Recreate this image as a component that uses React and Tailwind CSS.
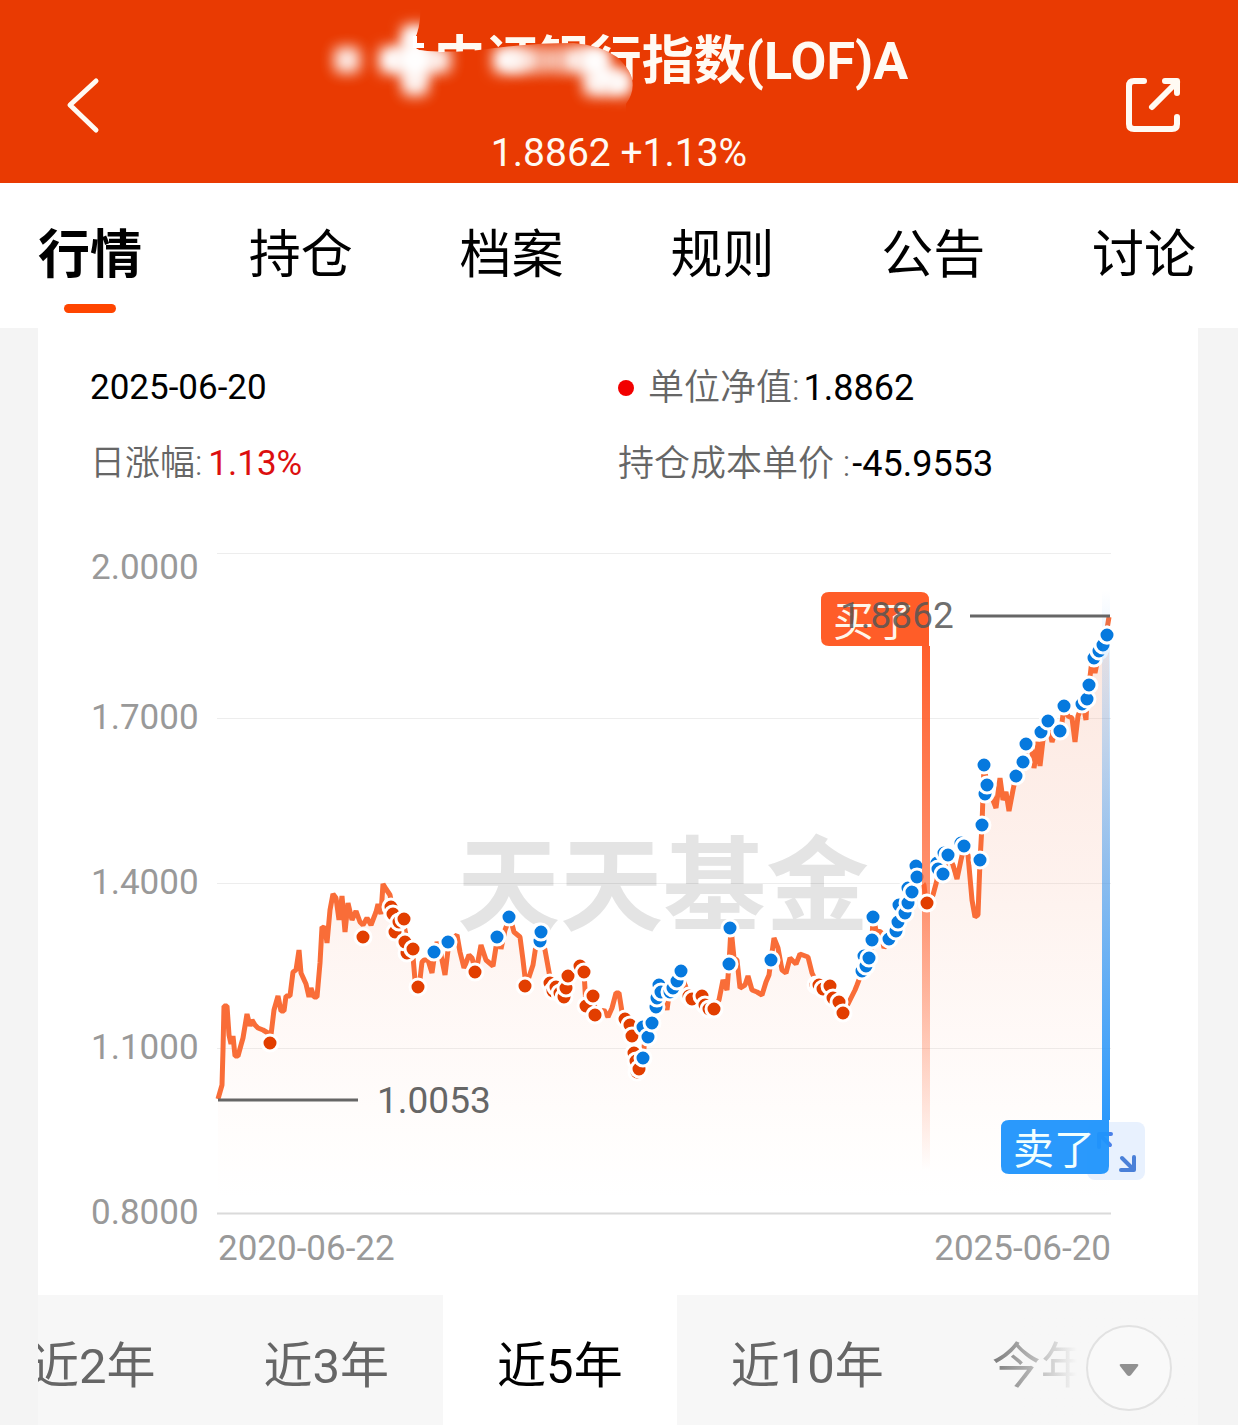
const TABS = ['行情', '持仓', '档案', '规则', '公告', '讨论'];
const RANGES = ['近2年', '近3年', '近5年', '近10年', '今年来'];

const AXIS = [
  { label: '2.0000', y: 553 },
  { label: '1.7000', y: 718 },
  { label: '1.4000', y: 883 },
  { label: '1.1000', y: 1048 },
  { label: '0.8000', y: 1213 },
];

const NET_VALUE =
  '218,1099 222,1085 223,1050 224,1006 227,1006 229,1035 231,1044 233,1036 235,1056 238,1056 241,1045 243,1038 247,1014 250,1026 252,1020 255,1025 258,1028 263,1030 268,1033 270,1040 271,1035 274,1010 278,996 281,1011 284,1011 286,996 290,996 293,972 296,970 299,950 301,973 306,984 309,997 311,988 314,997 317,997 320,963 322,927 325,928 327,943 330,910 333,894 336,898 339,920 342,896 345,932 348,903 352,920 356,911 360,922 363,925 367,918 371,925 376,912 378,904 381,914 383,884 386,889 390,895 392,905 396,925 402,915 407,940 412,945 415,980 419,988 422,962 424,960 428,960 432,973 435,952 437,942 441,955 445,975 449,942 457,935 460,952 464,968 469,955 472,958 476,972 481,945 486,960 493,966 496,947 499,935 501,949 505,930 510,917 514,932 520,937 523,960 526,986 533,965 536,945 541,932 545,950 549,972 552,990 558,996 564,995 566,987 568,976 575,970 580,964 584,972 586,1006 593,995 596,1015 604,1010 608,1017 612,1008 616,993 619,993 622,1012 627,1020 632,1035 635,1055 639,1072 643,1058 646,1028 652,1023 656,1000 660,985 664,992 667,1010 670,988 673,990 680,971 685,985 690,998 700,996 704,1005 710,1009 714,1009 719,1000 723,980 727,990 729,964 731,928 734,958 737,960 740,988 745,985 748,976 752,990 757,992 762,995 766,982 769,975 771,960 774,938 778,948 782,970 786,973 790,958 796,964 800,954 808,957 812,973 818,985 824,988 830,986 838,1000 843,1014 850,1000 855,990 857,985 862,972 866,963 870,958 872,940 873,917 876,930 881,932 884,948 890,938 898,925 903,912 908,900 912,890 916,866 921,880 924,885 926,903 933,895 937,880 938,865 943,873 948,855 953,865 957,879 961,860 964,847 968,855 972,900 975,917 978,915 980,861 982,825 984,765 987,785 990,790 993,800 996,808 1000,778 1003,800 1006,792 1009,811 1013,790 1016,776 1023,762 1027,744 1031,745 1034,768 1038,742 1040,766 1043,740 1048,722 1052,742 1056,730 1061,731 1064,706 1068,716 1072,718 1075,742 1078,716 1083,703 1086,720 1087,698 1089,685 1092,660 1095,673 1098,658 1102,648 1106,635 1109,617';

// b = bought, s = sold, in date order so later dots cover earlier ones
const TRADES = [
  ['b', [[270, 1043], [363, 937], [391, 907], [393, 914], [395, 932], [399, 922], [404, 919], [407, 953], [405, 942], [413, 949], [418, 987]]],
  ['s', [[434, 952], [448, 942]]],
  ['b', [[475, 972]]],
  ['s', [[497, 937], [509, 917]]],
  ['b', [[525, 986]]],
  ['s', [[539, 932], [540, 941], [541, 932]]],
  ['b', [[550, 983], [553, 991], [556, 987], [560, 993], [564, 997], [566, 988], [568, 976], [580, 966], [584, 972], [586, 1006], [593, 996], [595, 1015], [625, 1019], [630, 1025], [632, 1036], [634, 1053], [636, 1061], [637, 1072], [639, 1069]]],
  ['s', [[643, 1058], [643, 1027], [648, 1037], [652, 1023], [656, 1007], [657, 998], [659, 985], [661, 992], [670, 992], [673, 988], [677, 981], [681, 971]]],
  ['b', [[689, 996], [692, 999], [702, 996], [705, 1005], [709, 1009], [714, 1009]]],
  ['s', [[729, 964], [730, 928], [771, 960]]],
  ['b', [[816, 985], [819, 985], [823, 989], [830, 986], [833, 998], [839, 1002], [843, 1013]]],
  ['s', [[862, 971], [864, 956], [866, 966], [869, 958], [872, 940], [873, 917], [889, 939], [896, 931], [898, 922], [899, 905], [905, 913], [908, 903], [908, 888], [912, 892], [916, 866], [917, 877]]],
  ['b', [[927, 903]]],
  ['s', [[937, 863], [938, 869], [943, 874], [944, 853], [948, 855], [961, 843], [964, 846], [980, 860], [982, 825], [984, 765], [985, 794], [987, 785], [1016, 776], [1023, 762], [1026, 744], [1041, 732], [1048, 721], [1060, 731], [1064, 706], [1082, 704], [1087, 699], [1089, 685], [1094, 658], [1099, 651], [1103, 645], [1107, 635]]],
];

// x, y, opacity of each mosaic cell
const SMUDGES = [
  [348, 60, 0.9], [393, 60, 1], [416, 60, 1], [439, 60, 0.9], [416, 38, 1], [416, 83, 0.9],
  [507, 60, 1], [529, 60, 0.8], [552, 60, 0.65], [575, 60, 0.9], [597, 60, 1], [597, 83, 0.9], [620, 83, 1],
];

function TitleMask() {
  return (
    <svg className="absolute left-0 top-0 h-[112px] w-[310px]" viewBox="331 0 310 112" overflow="visible" aria-hidden="true">
      <defs>
        <filter id="soft" x="-100%" y="-100%" width="300%" height="300%">
          <feGaussianBlur stdDeviation="7" />
        </filter>
        <clipPath id="brush">
          <path d="M310 0H421Q423 26 415 40Q413 47 420 50Q440 53 480 50Q530 43 575 43Q600 45 618 57Q644 80 627 104V112H310Z" />
        </clipPath>
      </defs>
      <path d="M331 24H412V50Q440 54 480 50Q530 43 575 43Q600 45 618 57Q644 80 627 104H331Z" fill="#e93a02" />
      <path d="M414 36h4v7h7v5h-11z" fill="#fff" />
      <g clipPath="url(#brush)">
        {SMUDGES.map(([x, y, o]) => (
          <rect key={`${x}-${y}`} x={x - 13} y={y - 13} width="26" height="26" rx="6" fill="#fff" opacity={o} filter="url(#soft)" />
        ))}
        <path d="M393 60H436M416 34V84M507 60H526M580 60H597L602 80H622" fill="none" stroke="#fff" strokeWidth="18" filter="url(#soft)" />
      </g>
    </svg>
  );
}

function Header() {
  return (
    <header className="flex h-[183px] items-start justify-between bg-[#e93a02] pl-[60px] pr-[52px] text-[#fffaf3]">
      <button aria-label="返回" className="mt-[73px] w-14">
        <svg className="h-[64px] w-[48px]" viewBox="0 0 48 64" fill="none" stroke="currentColor" strokeWidth="5" strokeLinecap="round" strokeLinejoin="round">
          <path d="M36 8L10 32L36 57" />
        </svg>
      </button>
      <div className="flex flex-col items-center">
        <h1 className="relative pl-[104px] text-[52px] font-bold leading-[124px]">
          中证银行指数(LOF)A
          <TitleMask />
        </h1>
        <p className="text-[39px] leading-[58px]">1.8862 +1.13%</p>
      </div>
      <button aria-label="分享" className="mt-[73px]">
        <svg className="size-[64px]" viewBox="0 0 64 64" fill="none" stroke="currentColor" strokeWidth="6" strokeLinecap="round" strokeLinejoin="round">
          <path d="M22 8H12Q7 8 7 13V51Q7 56 12 56H50Q55 56 55 51V44M30 34L55 9M43 8H55V20" />
        </svg>
      </button>
    </header>
  );
}

function Tabs() {
  return (
    <nav className="flex h-[145px] items-start justify-between bg-white pl-[38px] pr-[42px] text-black">
      {TABS.map((tab, i) => (
        <button key={tab} className={`flex flex-col items-center text-[52px] leading-[80px] pt-[33px] ${i === 0 ? 'font-bold' : ''}`}>
          {tab}
          {i === 0 && <span className="mt-2 h-[9px] w-[52px] rounded-full bg-[#ff4500]" />}
        </button>
      ))}
    </nav>
  );
}

function Summary() {
  return (
    <div className="grid grid-cols-2 px-[52px] pt-[22px] pb-2 text-[36px] leading-[76px] text-black">
      <div className="text-[35px]">2025-06-20</div>
      <div className="flex items-center">
        <span className="mr-[14px] size-4 rounded-full bg-[#f20000]" />
        <span className="mr-1 text-[#666] font-[350]">单位净值:</span>
        1.8862
      </div>
      <div className="text-[35px]">
        <span className="mr-1.5 text-[#666] font-[350]">日涨幅:</span>
        <span className="text-[#dc0f0f]">1.13%</span>
      </div>
      <div>
        <span className="mr-0.5 text-[#666] font-[350]">持仓成本单价 :</span>
        -45.9553
      </div>
    </div>
  );
}

function Chart() {
  return (
    <div className="relative">
      <button aria-label="全屏" className="absolute bottom-[115px] right-[53px] size-[58px] rounded-lg bg-[#e8f1fe]">
        <svg className="size-full" viewBox="0 0 58 58" fill="none" stroke="#4a80d8" strokeWidth="4" strokeLinecap="round" strokeLinejoin="round">
          <path d="M35 36L46 47M47 35V48H34" />
          <path d="M12 25V12H24M13 13L23 23" stroke="#4a80e8" />
        </svg>
      </button>
      <svg className="pointer-events-none relative block w-full" viewBox="38 510 1160 785" role="img" aria-label="单位净值走势">
        <defs>
          <linearGradient id="area" gradientUnits="userSpaceOnUse" x1="0" y1="617" x2="0" y2="1200">
            <stop offset="0" stopColor="#f4a98c" stopOpacity="0.28" />
            <stop offset="0.45" stopColor="#f8b096" stopOpacity="0.17" />
            <stop offset="1" stopColor="#ffc9b5" stopOpacity="0" />
          </linearGradient>
          <linearGradient id="buy" gradientUnits="userSpaceOnUse" x1="0" y1="646" x2="0" y2="1170">
            <stop offset="0" stopColor="#ff5f2c" />
            <stop offset="0.5" stopColor="#ff5f2c" stopOpacity="0.65" />
            <stop offset="1" stopColor="#ff5f2c" stopOpacity="0" />
          </linearGradient>
          <linearGradient id="sell" gradientUnits="userSpaceOnUse" x1="0" y1="590" x2="0" y2="1120">
            <stop offset="0" stopColor="#2b99fc" stopOpacity="0" />
            <stop offset="0.5" stopColor="#2b8fee" stopOpacity="0.5" />
            <stop offset="1" stopColor="#2b99fc" />
          </linearGradient>
        </defs>

        <text x="457" y="923" fontSize="103" fontWeight="700" fill="#e4e4e4">天天基金</text>

        {AXIS.map(({ label, y }, i) => (
          <g key={label}>
            <line x1="217" x2="1111" y1={y + 0.5} y2={y + 0.5} stroke={i === 4 ? '#dadada' : '#000'} strokeOpacity={i === 4 ? 1 : 0.07} strokeWidth={i === 4 ? 2 : 1} />
            <text x="91" y={i === 0 ? 579 : y + 11} fontSize="35" fill="#999">{label}</text>
          </g>
        ))}
        <text x="218" y="1260" fontSize="35" fill="#999">2020-06-22</text>
        <text x="1111" y="1260" fontSize="35" fill="#999" textAnchor="end">2025-06-20</text>

        <polygon points={`218,1213 ${NET_VALUE} 1110,1213`} fill="url(#area)" />
        <polyline points={NET_VALUE} fill="none" stroke="#f96d38" strokeWidth="5" strokeLinejoin="bevel" />

        {TRADES.map(([side, dots]) =>
          dots.map(([x, y]) => (
            <circle key={`${x}-${y}`} cx={x} cy={y} r="8" fill={side === 'b' ? '#e23e00' : '#0679de'} stroke="#fff" strokeWidth="3" />
          ))
        )}

        <rect x="922" y="646" width="8" height="524" fill="url(#buy)" />
        <rect x="1102" y="590" width="8" height="530" fill="url(#sell)" />
        <circle cx="927" cy="903" r="8" fill="#e23e00" stroke="#fff" strokeWidth="3" />
        <circle cx="1107" cy="635" r="8" fill="#0679de" stroke="#fff" strokeWidth="3" />

        <path d="M829 592H921Q929 592 929 600V646H829Q821 646 821 638V600Q821 592 829 592Z" fill="#ff5d28" />
        <text x="833" y="636" fontSize="41" fill="#fff6ea">买了</text>
        <path d="M1009 1120H1109V1166Q1109 1174 1101 1174H1009Q1001 1174 1001 1166V1128Q1001 1120 1009 1120Z" fill="#1f93fc" fillOpacity="0.95" />
        <text x="1013" y="1164" fontSize="41" fill="#f2fffe">卖了</text>

        <g stroke="#666" strokeWidth="3">
          <line x1="218" x2="358" y1="1100" y2="1100" />
          <line x1="970" x2="1110" y1="616" y2="616" />
        </g>
        <text x="377" y="1113" fontSize="37" fill="#666">1.0053</text>
        <text x="840" y="628" fontSize="37" fill="#555" fillOpacity="0.85">1.8862</text>
      </svg>
    </div>
  );
}

function RangeBar() {
  return (
    <div className="relative h-[130px] overflow-hidden bg-[#f7f7f7]">
      <div className="-ml-[62px] flex h-full">
        {RANGES.map((range) => (
          <button
            key={range}
            className={`shrink-0 px-[54px] pt-[14px] text-[49px] ${range === '近5年' ? 'bg-white text-black' : 'text-[#666]'}`}
          >
            {range}
          </button>
        ))}
      </div>
      <div className="pointer-events-none absolute inset-y-0 right-0 w-[220px] bg-linear-to-r from-[#f7f7f7]/0 to-[#f7f7f7] to-45%" />
      <button aria-label="更多" className="absolute right-[26px] top-[30px] flex size-[86px] items-center justify-center rounded-full border-2 border-[#e2e2e2] bg-[#f9f9f9]">
        <svg className="mt-1 h-[14px] w-[20px]" viewBox="0 0 20 14" fill="#919191">
          <path d="M2 1H18Q20 1 19 3L12 12Q10 14 8 12L1 3Q0 1 2 1Z" />
        </svg>
      </button>
    </div>
  );
}

export default function App() {
  return (
    <div className="bg-[#f4f4f4] font-[Roboto,'Noto_Sans_CJK_SC',sans-serif]">
      <Header />
      <Tabs />
      <main className="ml-[38px] mr-[40px] bg-white">
        <Summary />
        <Chart />
        <RangeBar />
      </main>
    </div>
  );
}
